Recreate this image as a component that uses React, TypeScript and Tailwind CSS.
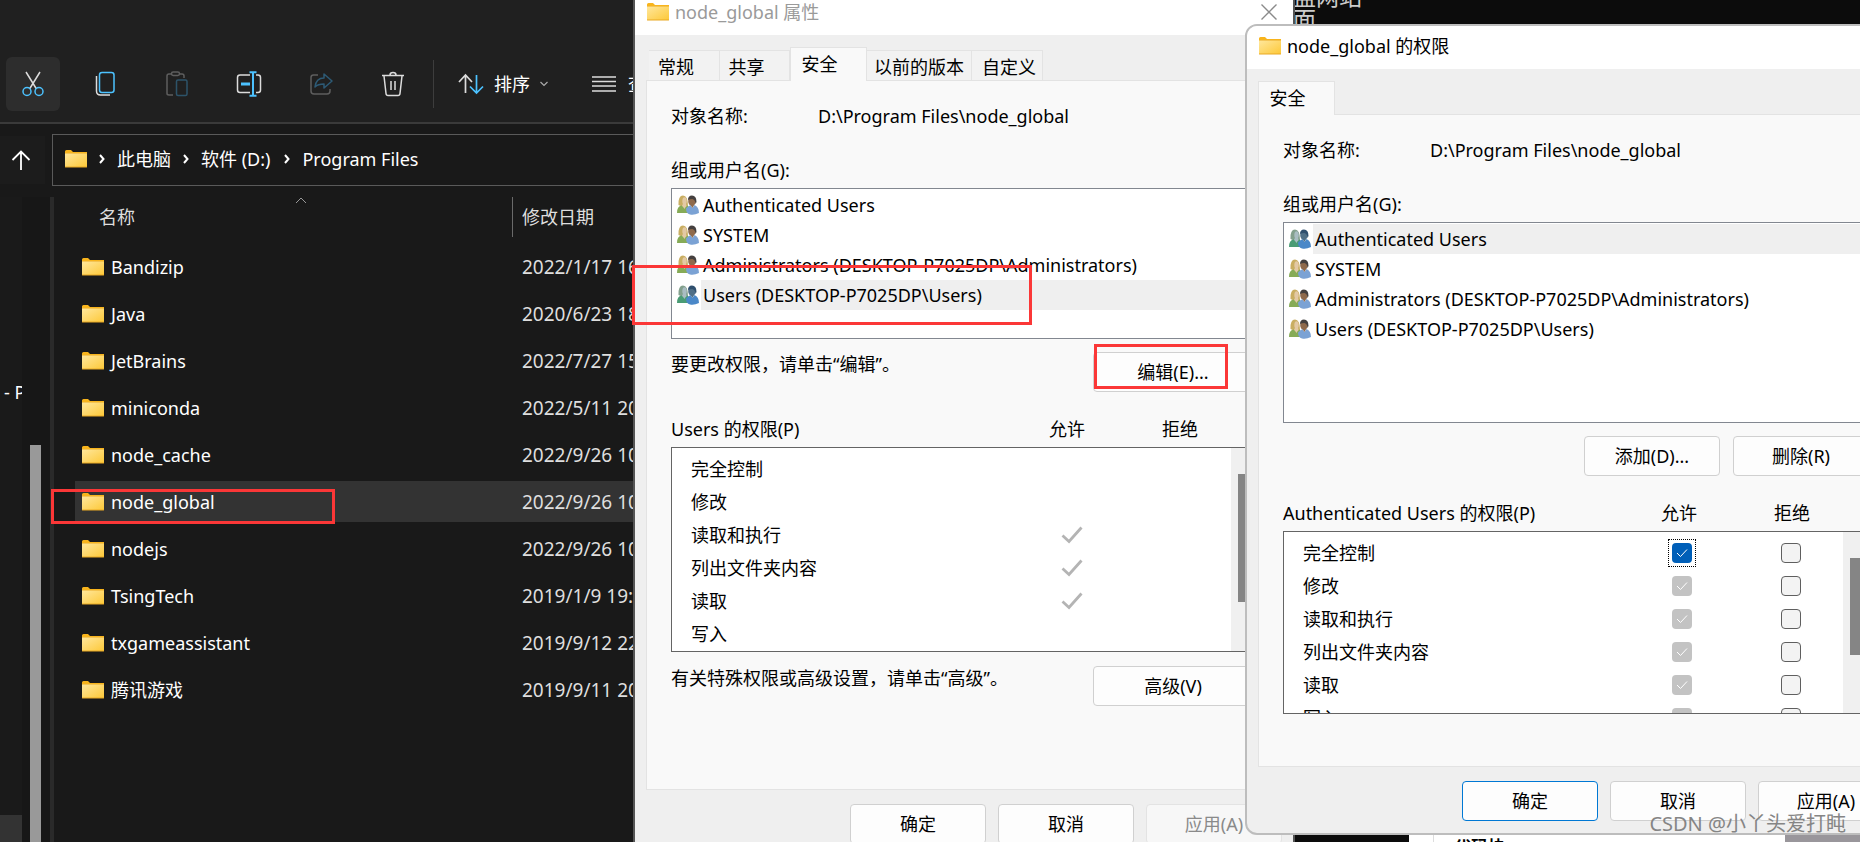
import type { ReactNode } from 'react';

const files = [
  { name: 'Bandizip', date: '2022/1/17 16:20' },
  { name: 'Java', date: '2020/6/23 18:05' },
  { name: 'JetBrains', date: '2022/7/27 15:11' },
  { name: 'miniconda', date: '2022/5/11 20:43' },
  { name: 'node_cache', date: '2022/9/26 10:36' },
  { name: 'node_global', date: '2022/9/26 10:36' },
  { name: 'nodejs', date: '2022/9/26 10:38' },
  { name: 'TsingTech', date: '2019/1/9 19:27' },
  { name: 'txgameassistant', date: '2019/9/12 22:14' },
  { name: '腾讯游戏', date: '2019/9/11 20:50' },
];

const groups = [
  'Authenticated Users',
  'SYSTEM',
  'Administrators (DESKTOP-P7025DP\\Administrators)',
  'Users (DESKTOP-P7025DP\\Users)',
];

const permissions = ['完全控制', '修改', '读取和执行', '列出文件夹内容', '读取', '写入'];

function FolderIcon() {
  return (
    <svg width="22" height="18" viewBox="0 0 22 18" className="shrink-0" aria-hidden="true">
      <defs>
        <linearGradient id="folder" x1="0" y1="0" x2="1" y2="1">
          <stop offset="0" stopColor="#ffe79c" />
          <stop offset="1" stopColor="#fdc93a" />
        </linearGradient>
      </defs>
      <path d="M0 1.5Q0 0 1.5 0H6l2 2h14v4H0z" fill="#f8b41c" />
      <rect y="3" width="22" height="14.5" rx="0.5" fill="#e9a924" />
      <rect y="3.5" width="22" height="13" fill="url(#folder)" />
    </svg>
  );
}

function GroupIcon({ selected }: { selected?: boolean }) {
  const hair = selected ? '#83a08d' : '#c9ae62';
  const skin = selected ? '#a9bdc2' : '#e3c9a4';
  const top = selected ? '#4a9c75' : '#86ab57';
  const head = selected ? '#4f6f87' : '#8f6a4c';
  const dark = selected ? '#2f4f6e' : '#45403f';
  const shirt = selected ? '#4a88c8' : '#7ba2d4';
  return (
    <svg width="22" height="20" viewBox="0 0 22 20" className="shrink-0" aria-hidden="true">
      <path d="M1.500 10Q1 0.500 6 0.500 11 0.500 11 11 6 13 1.500 10z" fill={hair} />
      <ellipse cx="7.500" cy="6" rx="2.200" ry="3.800" fill={skin} />
      <path d="M0 18Q0 11 4.500 10.500l3 2 3-2q2.500 2 1.500 7.500z" fill={top} />
      <path d="M5 10.500l2.500 3.500 2-3.500L9 9H6z" fill={skin} />
      <ellipse cx="15" cy="6" rx="3.800" ry="5" fill={head} />
      <path d="M11 5Q11 0.500 15 0.500 19.500 0.500 19.500 7l-1 2q0-4-3-5-3 0-4.500 1z" fill={dark} />
      <path d="M9 13.500q2-2.500 4.500-3.500l2 3 2-3q4.500 2 4.500 8-5 2.500-9 1.500-4-1-4-6z" fill={shirt} />
      <path d="M13.500 10l2 3 1.500-3z" fill={head} />
    </svg>
  );
}

function CutIcon() {
  return (
    <svg width="24" height="26" viewBox="0 0 24 26" fill="none" strokeWidth="1.500" aria-hidden="true">
      <path d="M5 1l10.500 17M19 1L8.500 18" stroke="#dcdcdc" />
      <circle cx="6" cy="20.500" r="4" stroke="#4cc2ff" />
      <circle cx="18" cy="20.500" r="4" stroke="#4cc2ff" />
    </svg>
  );
}

function CopyIcon() {
  return (
    <svg width="24" height="26" viewBox="0 0 24 26" fill="none" strokeWidth="1.500" aria-hidden="true">
      <path d="M3.500 5v15q0 4 4 4H17" stroke="#dcdcdc" />
      <rect x="6.500" y="1.500" width="14.500" height="20" rx="2.500" stroke="#4cc2ff" />
    </svg>
  );
}

function PasteIcon() {
  return (
    <svg width="24" height="26" viewBox="0 0 24 26" fill="none" strokeWidth="1.500" aria-hidden="true">
      <path d="M7 3H4Q2 3 2 5v17.500Q2 24 4 24h4M14 3h3q2 0 2 2v2" stroke="#5e5e5e" />
      <rect x="6.500" y="1" width="8" height="3.500" rx="1.700" stroke="#5e5e5e" />
      <rect x="11.500" y="9" width="10.500" height="15.500" rx="1.500" stroke="#2d5369" />
    </svg>
  );
}

function RenameIcon() {
  return (
    <svg width="26" height="26" viewBox="0 0 26 26" fill="none" strokeWidth="1.500" aria-hidden="true">
      <path d="M14 4H4Q1.500 4 1.500 6.500v12.500Q1.500 21.500 4 21.500h10M20 4h2q2.500 0 2.500 2.500v12.500q0 2.500-2.500 2.500h-2" stroke="#dcdcdc" />
      <path d="M5 13h9" stroke="#4cc2ff" strokeWidth="3" />
      <path d="M17 1v24M13.500 1.200h7M13.500 24.800h7" stroke="#4cc2ff" strokeWidth="2" />
    </svg>
  );
}

function ShareIcon() {
  return (
    <svg width="24" height="26" viewBox="0 0 24 26" fill="none" strokeWidth="1.500" strokeLinejoin="round" aria-hidden="true">
      <path d="M9 4H4.500Q2 4 2 6.500V20q0 3 3 3h13q3 0 3-3v-2" stroke="#5e5e5e" />
      <path d="M15 3l8 7-8 7v-4q-6 0-9 3 1-9 9-9z" stroke="#2d5a75" />
    </svg>
  );
}

function DeleteIcon() {
  return (
    <svg width="24" height="26" viewBox="0 0 24 26" fill="none" strokeWidth="1.500" stroke="#dcdcdc" aria-hidden="true">
      <path d="M1 4.500h22M9 4Q9 1.500 12 1.500T15 4M3 5l2 17.500Q5.200 24.500 7 24.500h10q1.800 0 2-2L21 5M10 10v9M14 10v9" />
    </svg>
  );
}

function SortIcon() {
  return (
    <svg width="26" height="22" viewBox="0 0 26 22" fill="none" strokeWidth="1.700" aria-hidden="true">
      <path d="M7.500 20V2M1 9l6.500-7L14 9" stroke="#dcdcdc" />
      <path d="M18.500 2v18M12 13.500l6.500 6.500 6.500-6.500" stroke="#4cc2ff" />
    </svg>
  );
}

function Chevron() {
  return (
    <svg width="6" height="10" viewBox="0 0 6 10" fill="none" stroke="#fff" strokeWidth="2" aria-hidden="true">
      <path d="M1 1l3.500 4L1 9" />
    </svg>
  );
}

const tools = [
  { label: '剪切', icon: <CutIcon /> },
  { label: '复制', icon: <CopyIcon /> },
  { label: '粘贴', icon: <PasteIcon /> },
  { label: '重命名', icon: <RenameIcon /> },
  { label: '共享', icon: <ShareIcon /> },
  { label: '删除', icon: <DeleteIcon /> },
];

function Explorer() {
  return (
    <div className="flex flex-col h-full bg-[#191919] text-white">
      <header className="flex items-center h-[124px] pt-[46px] pl-[6px] bg-[#202020] border-b-2 border-[#3a3a3a]">
        <div className="flex gap-[18px]">
          {tools.map((tool, i) => (
            <button
              key={tool.label}
              aria-label={tool.label}
              className={`flex items-center justify-center size-[54px] rounded-md ${i === 0 ? 'bg-[#2d2d2d]' : ''}`}
            >
              {tool.icon}
            </button>
          ))}
        </div>
        <div className="w-px h-12 ml-[13px] mr-6 bg-[#3d3d3d]" />
        <button className="flex items-center gap-[10px]">
          <SortIcon />
          排序
          <svg width="8" height="6" viewBox="0 0 8 6" fill="none" stroke="#aaa" strokeWidth="1.200" aria-hidden="true">
            <path d="M0.500 1L4 4.500 7.500 1" />
          </svg>
        </button>
        <button className="flex items-center gap-3 ml-11">
          <svg width="24" height="16" viewBox="0 0 24 16" stroke="#dcdcdc" strokeWidth="1.500" aria-hidden="true">
            <path d="M0 1h24M0 5.500h24M0 10h24M0 15h24" />
          </svg>
          查看
        </button>
      </header>

      <div className="flex items-center gap-[7px] h-[73px] pb-[1px]">
        <button aria-label="上一级" className="flex items-center justify-center w-[45px] h-12 pr-1 bg-[#1c1c1c]">
          <svg width="20" height="20" viewBox="0 0 20 20" fill="none" stroke="#fff" strokeWidth="1.800" aria-hidden="true">
            <path d="M10 20V1.500M1.500 10L10 1.500 18.500 10" />
          </svg>
        </button>
        <nav className="flex items-center flex-1 h-[52px] pl-3 pb-[2px] border border-[#5a5a5a]">
          <FolderIcon />
          <span className="pl-3 pr-3"><Chevron /></span>
          <a href="#pc">此电脑</a>
          <span className="pl-3 pr-3"><Chevron /></span>
          <a href="#d">软件 (D:)</a>
          <span className="pl-[14px] pr-3"><Chevron /></span>
          <a href="#files">Program Files</a>
        </nav>
      </div>

      <div className="flex flex-1 min-h-0">
        <aside className="flex flex-col justify-between w-[22px] bg-[#1a1a1a] overflow-hidden">
          <span className="pl-1 pt-[183px] whitespace-nowrap">- P</span>
          <div className="h-[27px] bg-[#333]" />
        </aside>
        <div className="w-7 pl-2 pt-[248px] bg-[#171717]">
          <div className="w-[11px] h-full bg-[#999]" />
        </div>
        <div className="w-1 bg-[#2a2a2a]" />
        <table className="flex-1 block ml-[21px]">
          <thead className="block">
            <tr className="flex text-[#dedede]">
              <th className="relative w-[438px] h-10 pt-2 pl-6 text-left font-normal border-r border-[#6a6a6a]">
                名称
                <svg width="12" height="7" viewBox="0 0 12 7" fill="none" stroke="#999" className="absolute left-[220px] top-0" aria-hidden="true">
                  <path d="M1 6l5-5 5 5" />
                </svg>
              </th>
              <th className="pt-2 pl-[9px] text-left font-normal">修改日期</th>
            </tr>
          </thead>
          <tbody className="flex flex-col gap-[6px] pt-[9px]">
            {files.map((file) => (
              <tr key={file.name} className={`flex items-center h-[41px] ${file.name === 'node_global' ? 'bg-[#333]' : ''}`}>
                <td className="flex items-center gap-[7px] w-[447px] pl-[7px]">
                  <FolderIcon />
                  {file.name}
                </td>
                <td className="text-[19px] text-[#dedede]">{file.date}</td>
              </tr>
            ))}
          </tbody>
        </table>
      </div>
    </div>
  );
}

function Button({
  children,
  look = 'bg-[#fdfdfd] border-[#d0d0d0]',
  className = 'w-[136px]',
}: {
  children: ReactNode;
  look?: string;
  className?: string;
}) {
  return <button className={`h-10 border rounded-[4px] ${look} ${className}`}>{children}</button>;
}

function ObjectInfo() {
  return (
    <>
      <div className="flex">
        <span className="w-[147px]">对象名称:</span>
        <span>D:\Program Files\node_global</span>
      </div>
      <p className="mt-[30px]">组或用户名(G):</p>
    </>
  );
}

function GroupList({ selected, className }: { selected: number; className: string }) {
  return (
    <ul className={`mt-[6px] pt-px pl-[5px] bg-white border border-[#828790] ${className}`}>
      {groups.map((group, i) => (
        <li key={group} className="flex items-center h-[30px]">
          <GroupIcon selected={i === selected} />
          <span className={`flex-1 flex items-center h-full ml-[2px] pl-[2px] ${i === selected ? 'bg-[#efefef]' : ''}`}>
            {group}
          </span>
        </li>
      ))}
    </ul>
  );
}

function PermissionHeader({ name }: { name: string }) {
  return (
    <div className="flex mt-[25px]">
      <span className="w-[340px]">{name} 的权限(P)</span>
      <span className="w-28 text-center">允许</span>
      <span className="w-[114px] text-center">拒绝</span>
    </div>
  );
}

function Tick() {
  return (
    <svg width="22" height="18" viewBox="0 0 22 18" fill="none" stroke="#b4b4b4" strokeWidth="2.800" className="ml-[47px]" aria-hidden="true">
      <path d="M1.500 9.500L8 15.500 20.500 1.500" />
    </svg>
  );
}

function CheckBox({ label, checked, disabled }: { label: string; checked?: boolean; disabled?: boolean }) {
  const look = !checked ? 'bg-[#f3f3f3] border border-[#5f5f5f]' : disabled ? 'bg-[#c3c3c3]' : 'bg-[#005fb8]';
  return (
    <label className={`grid place-items-center size-[28px] mx-auto ${checked && !disabled ? 'border border-dotted border-black' : ''}`}>
      <input
        type="checkbox"
        aria-label={label}
        defaultChecked={checked}
        disabled={disabled}
        className={`col-start-1 row-start-1 appearance-none size-5 rounded-[4px] ${look}`}
      />
      {checked && (
        <svg width="12" height="10" viewBox="0 0 12 10" fill="none" stroke="#fff" className="col-start-1 row-start-1" aria-hidden="true">
          <path d="M1 5l3.500 3.500L11 1.500" />
        </svg>
      )}
    </label>
  );
}

function PermissionBox({ editable, className, thumb }: { editable?: boolean; className: string; thumb: string }) {
  return (
    <div className={`flex mt-[6px] bg-white border border-[#646464] overflow-hidden ${className}`}>
      <table className="table-fixed w-[566px] mt-1 self-start">
        <tbody>
          {permissions.map((name, i) => (
            <tr key={name} className="h-[33px]">
              <td className="w-[342px] pl-[19px]">{name}</td>
              <td className="w-28">
                {editable && <CheckBox label={`${name} 允许`} checked disabled={i > 0} />}
                {!editable && i > 1 && i < 5 && <Tick />}
              </td>
              <td>{editable && <CheckBox label={`${name} 拒绝`} />}</td>
            </tr>
          ))}
        </tbody>
      </table>
      <div className="w-[25px] ml-auto pt-[26px] pl-[7px] bg-[#f0f0f0]">
        <div className={`w-[11px] bg-[#858585] ${thumb}`} />
      </div>
    </div>
  );
}

function Tab({ children, active, className }: { children: ReactNode; active?: boolean; className: string }) {
  return (
    <button
      className={`flex items-center justify-center border border-b-0 border-[#e3e3e3] ${
        active ? 'h-[34px] -mb-px pb-[2px] bg-[#f9f9f9]' : 'h-[30px] pt-[2px] border-l-0 bg-[#f2f2f2]'
      } ${className}`}
    >
      {children}
    </button>
  );
}

function Panel({ children, className }: { children: ReactNode; className: string }) {
  return <div className={`pt-[23px] px-6 bg-[#f9f9f9] border border-[#e3e3e3] ${className}`}>{children}</div>;
}

function PropertiesWindow() {
  return (
    <section className="absolute left-[633px] top-[-12px] w-[662px] h-[920px] bg-[#efefef] border-x-2 border-[#555]">
      <header className="flex items-center h-[47px] pl-3 pr-4 bg-white text-[#9a9a9a]">
        <FolderIcon />
        <h2 className="ml-[6px]">node_global 属性</h2>
        <button aria-label="关闭" className="ml-auto">
          <svg width="16" height="16" viewBox="0 0 16 16" fill="none" stroke="#8a8a8a" strokeWidth="1.400" aria-hidden="true">
            <path d="M0.500 0.500l15 15M15.500 0.500l-15 15" />
          </svg>
        </button>
      </header>
      <div className="pt-3 px-[11px]">
        <div className="flex items-end h-[33px] pl-[3px]">
          <Tab className="w-[71px] pr-4">常规</Tab>
          <Tab className="w-[70px] pr-4">共享</Tab>
          <Tab active className="w-[77px] pr-[18px]">安全</Tab>
          <Tab className="w-[105px]">以前的版本</Tab>
          <Tab className="w-[71px] pl-1">自定义</Tab>
        </div>
        <Panel className="pb-[83px]">
          <ObjectInfo />
          <GroupList selected={3} className="h-[151px]" />
          <div className="flex justify-between items-start mt-[13px]">
            <p>要更改权限，请单击“编辑”。</p>
            <Button className="w-[164px] pr-1">编辑(E)...</Button>
          </div>
          <PermissionHeader name="Users" />
          <PermissionBox className="h-[205px]" thumb="h-[128px]" />
          <div className="flex justify-between items-start mt-[14px]">
            <p>有关特殊权限或高级设置，请单击“高级”。</p>
            <Button className="w-[164px] pr-1">高级(V)</Button>
          </div>
        </Panel>
        <div className="flex justify-end gap-3 mt-[14px]">
          <Button>确定</Button>
          <Button>取消</Button>
          <Button look="text-[#8a8a8a] bg-[#f7f7f7] border-[#e3e3e3]">应用(A)</Button>
        </div>
      </div>
    </section>
  );
}

function PermissionsWindow() {
  return (
    <section className="absolute left-[1245px] top-6 w-[662px] bg-[#efefef] border-2 border-[#bdbdbd] rounded-[12px] overflow-hidden">
      <header className="flex items-center h-[43px] pl-3 pb-[3px] bg-white">
        <FolderIcon />
        <h2 className="ml-[6px]">node_global 的权限</h2>
      </header>
      <div className="pt-3 pb-3 px-[11px]">
        <div className="flex items-end h-[33px]">
          <Tab active className="w-[77px] pr-[18px]">安全</Tab>
        </div>
        <Panel className="pb-[52px]">
          <ObjectInfo />
          <GroupList selected={0} className="h-[201px]" />
          <div className="flex justify-end gap-[13px] mt-[13px]">
            <Button>添加(D)...</Button>
            <Button>删除(R)</Button>
          </div>
          <PermissionHeader name="Authenticated Users" />
          <PermissionBox editable className="h-[183px]" thumb="h-[97px]" />
        </Panel>
        <div className="flex justify-end gap-3 mt-[14px]">
          <Button look="bg-[#fdfdfd] border-[#0078d4]">确定</Button>
          <Button>取消</Button>
          <Button>应用(A)</Button>
        </div>
      </div>
    </section>
  );
}

// console and browser windows that show at the edges behind the dialogs
function Backdrop() {
  return (
    <div className="absolute inset-y-0 left-[1293px] right-0 flex flex-col justify-between bg-[#0c0c0c]">
      <div className="-mt-3 text-[23px] leading-[23px] text-[#ccc] font-['Liberation_Mono','Noto_Sans_CJK_SC',monospace]">
        <p>盖网站</p>
        <p>面</p>
      </div>
      <div className="flex h-10 pl-[116px]">
        <div className="w-6 bg-white" />
        <div className="flex-1 pt-[33px] pl-5 bg-white border-l border-[#ddd] text-[17px] font-bold overflow-hidden">代码块</div>
        <div className="w-[75px] bg-[#99969b]" />
      </div>
    </div>
  );
}

export default function App() {
  return (
    <main className="relative h-screen overflow-hidden bg-[#191919] text-black text-[18px] leading-6 font-['Noto_Sans','Noto_Sans_CJK_SC',sans-serif]">
      <Explorer />
      <Backdrop />
      <PropertiesWindow />
      <PermissionsWindow />
      <div className="absolute left-[51px] top-[489px] w-[284px] h-[35px] border-3 border-[#fb3737]" />
      <div className="absolute left-[632px] top-[265px] w-[400px] h-[60px] border-3 border-[#fb3737]" />
      <div className="absolute left-[1094px] top-[344px] w-[134px] h-[45px] border-3 border-[#fb3737]" />
      <p className="absolute right-[14px] bottom-[6px] text-[20px] text-[#858585]">CSDN @小丫头爱打盹</p>
    </main>
  );
}
